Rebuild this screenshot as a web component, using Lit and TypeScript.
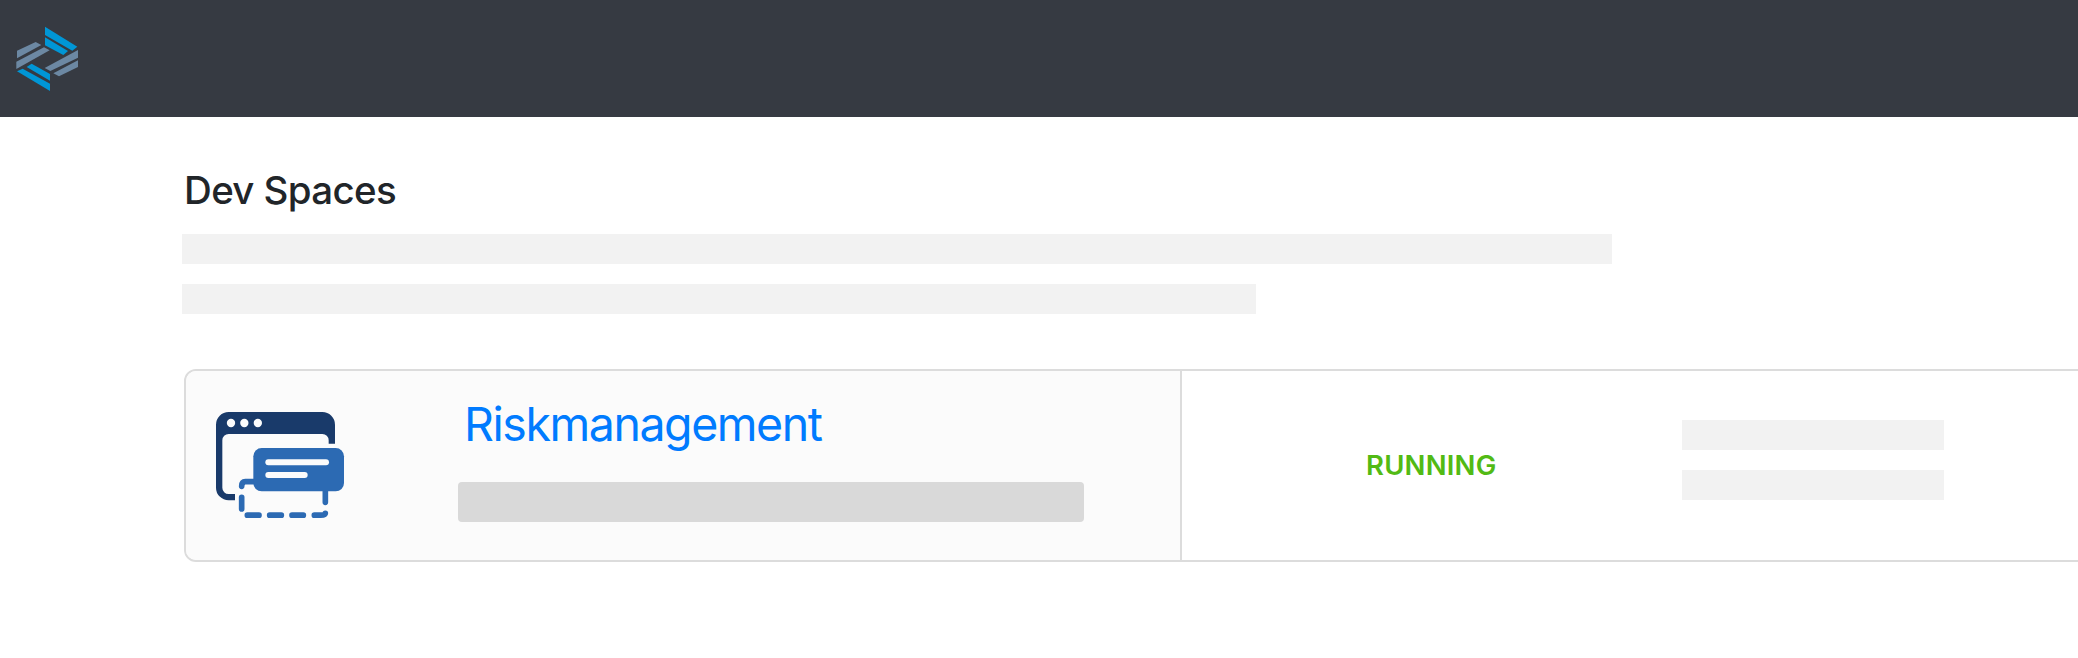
import { LitElement, html, css } from "lit";
import { customElement } from "lit/decorators.js";

@customElement("app-root")
export class AppRoot extends LitElement {
  static styles = css`
    :host { display: block; height: 658px; overflow: hidden; background: #fff; font-family: Inter, "Liberation Sans", sans-serif; }
    .header { display: flex; box-sizing: border-box; height: 117px; padding: 10px 0 0; background: #363a42; }
    .logo { display: block; width: 100px; height: 100px; }
    .content { padding: 49px 0 0 182px; }
    h1 { margin: 0; padding-left: 2px; font-size: 38.5px; line-height: 48px; font-weight: 500; letter-spacing: -0.65px; color: #212529; }
    .bar { height: 30px; background: #f2f2f2; }
    .intro { display: grid; gap: 20px; padding-top: 20px; }
    .long { width: 1430px; }
    .short { width: 1074px; }
    .card { display: flex; box-sizing: border-box; width: 1920px; height: 193px; margin: 55px 0 0 2px; border: 2px solid #dcdcdc; border-radius: 12px; overflow: hidden; background: #fff; }
    .summary { display: flex; box-sizing: border-box; flex: none; width: 996px; border-right: 2px solid #dcdcdc; background: #fbfbfb; }
    .icon { display: block; flex: none; width: 130px; height: 110px; margin: 39px 0 0 29px; }
    .details { padding: 24px 0 0 113px; }
    .name { display: block; padding-left: 6px; font-size: 46.5px; line-height: 58px; letter-spacing: -1.45px; color: #007bff; text-decoration: none; }
    .caption { width: 626px; height: 40px; margin-top: 29px; border-radius: 4px; background: #d9d9d9; }
    .status { flex: none; width: 500px; padding: 77px 0 0 184px; box-sizing: border-box; font-size: 27.5px; line-height: 34px; font-weight: 600; letter-spacing: 0.2px; color: #52ba14; }
    .meta { display: grid; align-content: start; gap: 20px; width: 262px; padding-top: 49px; }
  `;

  render() {
    return html`
      <header class="header">
        <svg class="logo" viewBox="0 0 300 300">
          <g fill="#0096d6">
            <path d="M135 50L232 110L217 122.500L135 75Z" />
            <path d="M135 82L204 123L190 135L135 106Z" />
            <path d="M150 243L51 184L68 176L150 221Z" />
            <path d="M150 212L80 171L95 161L150 192Z" />
          </g>
          <g fill="#6c88a3">
            <path d="M51 122L107 96L124 105L51 145Z" />
            <path d="M49 155L132 112L149 121L49 177Z" />
            <path d="M234 120V143L151 183L134 174Z" />
            <path d="M234 151V171L177 199L160 190Z" />
          </g>
        </svg>
      </header>
      <main class="content">
        <h1>Dev Spaces</h1>
        <div class="intro">
          <div class="bar long"></div>
          <div class="bar short"></div>
        </div>
        <section class="card">
          <div class="summary">
            <svg class="icon" viewBox="120 150 390 330">
              <path fill="#193a6a" d="M180 421H161A38 38 0 0 1 123 383V194A38 38 0 0 1 161 156H442A38 38 0 0 1 480 194V251H461V241A19 19 0 0 0 442 222H161A19 19 0 0 0 142 241V383A19 19 0 0 0 161 402H180Z" />
              <g fill="#fbfbfb"><circle cx="168" cy="189" r="12.5" /><circle cx="208" cy="189" r="12.5" /><circle cx="248.500" cy="189" r="12.500" /></g>
              <g fill="none" stroke="#2c6ab3" stroke-width="17" stroke-linecap="round">
                <path d="M240 365H211Q200 365 200 379M200 412V447M217 465.500H252M284 465.500H319M351 465.500H385M418 465.500H437Q451 465.500 451 460M451 390V427" />
              </g>
              <rect x="235" y="264" width="272" height="130" rx="25" fill="#2c6ab3" />
              <g fill="#fbfbfb"><rect x="271" y="298" width="191" height="18" rx="9" /><rect x="271" y="336" width="127" height="18" rx="9" /></g>
            </svg>
            <div class="details">
              <a class="name">Riskmanagement</a>
              <div class="caption"></div>
            </div>
          </div>
          <div class="status">RUNNING</div>
          <div class="meta">
            <div class="bar"></div>
            <div class="bar"></div>
          </div>
        </section>
      </main>
    `;
  }
}
